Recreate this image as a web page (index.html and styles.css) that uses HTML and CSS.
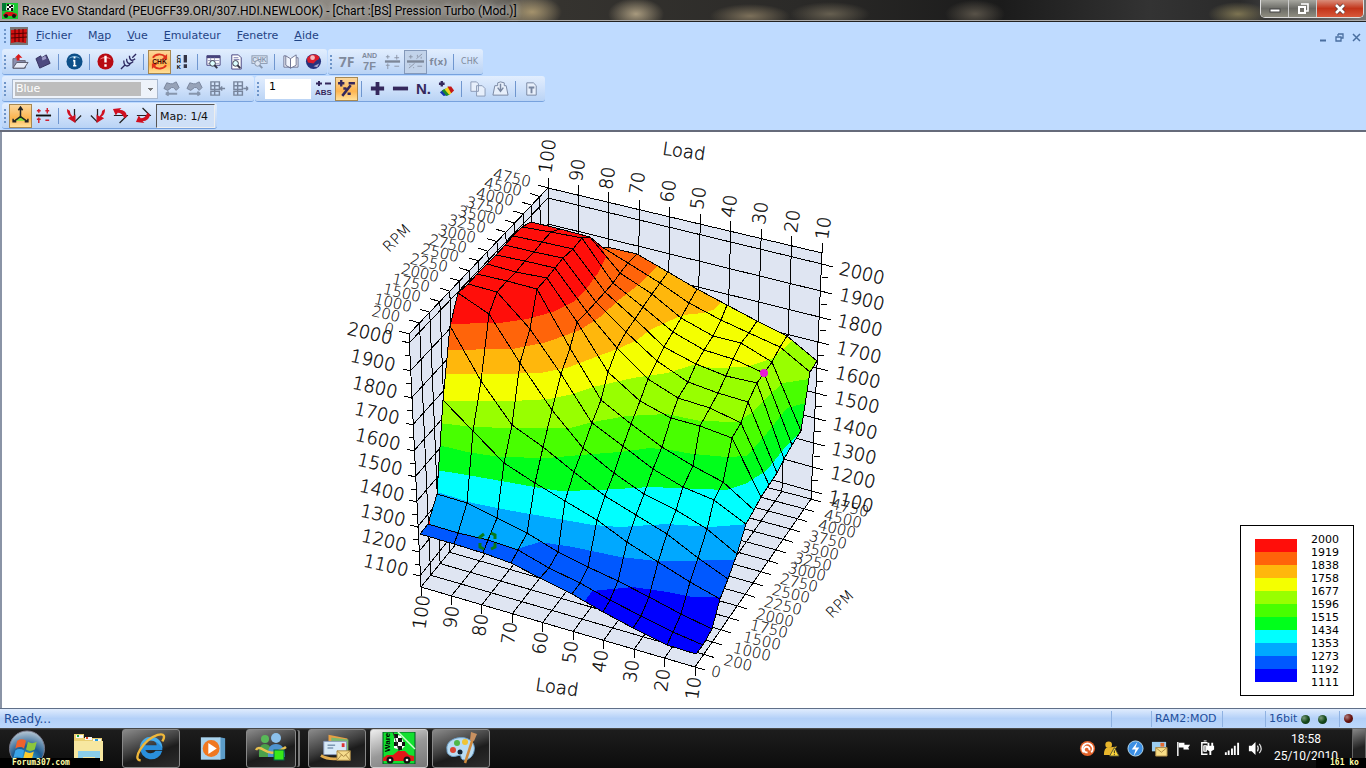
FILE: index.html
```html
<!DOCTYPE html>
<html lang="fr">
<head>
<meta charset="utf-8">
<title>Race EVO Standard</title>
<link rel="stylesheet" href="styles.css">
</head>
<body>
<header class="titlebar">
  <svg class="app-icon" viewBox="0 0 16 16"><rect width="16" height="16" fill="#18c830"/><path d="M5 1l7 1-1 6-7-1z" fill="#fff"/><path d="M5 1h2v2H5zM9 2h2v2H9zM7 3h2v2H7zM5 5h2v2H5zM9 5h2v3H9z" fill="#111"/><path d="M1 12l3-3h6l5 2v2H1z" fill="#d81414"/><circle cx="4" cy="13" r="2" fill="#111"/><circle cx="12" cy="13" r="2" fill="#111"/><path d="M0 0h4v8H0z" fill="#073"/></svg>
  <h1 class="title-text">Race EVO Standard (PEUGFF39.ORI/307.HDI.NEWLOOK) - [Chart :[BS] Pression Turbo (Mod.)]</h1>
  <div class="win-controls">
    <button class="win-btn" aria-label="Minimize"><svg width="12" height="10"><rect x="1" y="5" width="10" height="3" fill="#fff" stroke="#444"/></svg></button>
    <button class="win-btn" aria-label="Restore"><svg width="12" height="12"><path d="M4 1h7v7H9" fill="none" stroke="#fff" stroke-width="1.6"/><rect x="2" y="4" width="6" height="6" fill="none" stroke="#fff" stroke-width="2"/></svg></button>
    <button class="win-btn win-close" aria-label="Close"><svg width="12" height="12"><path d="M2 2l8 8M10 2l-8 8" stroke="#533" stroke-width="4"/><path d="M2 2l8 8M10 2l-8 8" stroke="#fff" stroke-width="2.6"/></svg></button>
  </div>
</header>

<div class="bars">
  <nav class="menubar">
    <span class="grip"></span>
    <svg class="map-icon" viewBox="0 0 18 18"><rect width="18" height="18" fill="#777"/><path d="M1 3l16-1-1 14-9-1-6 1z" fill="#d01010"/><path d="M1 7l16-1M1 11l16-1M5 2v13M9 2v13M13 2v13" stroke="#500" fill="none"/></svg>
    <a href="#" class="menu-item"><u>F</u>ichier</a>
    <a href="#" class="menu-item">M<u>a</u>p</a>
    <a href="#" class="menu-item"><u>V</u>ue</a>
    <a href="#" class="menu-item"><u>E</u>mulateur</a>
    <a href="#" class="menu-item"><u>F</u>enetre</a>
    <a href="#" class="menu-item"><u>A</u>ide</a>
    <div class="mdi">
      <button aria-label="Minimize chart"><svg width="8" height="8"><path d="M1 6.500h6" stroke="#4a6fa0" stroke-width="2"/></svg></button>
      <button aria-label="Restore chart"><svg width="9" height="9"><path d="M3 1h5v4H6M1 4h5v4H1zM3 1v2" fill="none" stroke="#4a6fa0" stroke-width="1.300"/></svg></button>
      <button aria-label="Close chart"><svg width="9" height="9"><path d="M1 1l7 7M8 1l-7 7" stroke="#4a6fa0" stroke-width="1.500"/></svg></button>
    </div>
  </nav>

  <div class="row">
    <div class="toolbar">
      <span class="grip"></span>
      <button class="tb" aria-label="Open"><svg viewBox="0 0 18 18"><path d="M1 6h5l2 2h6v8H1z" fill="#8c90b0" stroke="#667"/><path d="M1 16l4-6h12l-4 6z" fill="#e8ecf8" stroke="#556"/><path d="M5 8V5H3l4-4 4 4H8v3z" fill="#d81818"/></svg></button>
      <button class="tb" aria-label="Save"><svg viewBox="0 0 18 18"><path d="M1 6l5-3 1 2 5-3 4 9-11 5z" fill="#4d4a80" stroke="#33305c"/><path d="M7 5l4-2 1 3-4 2z" fill="#9d9ac8"/></svg></button>
      <i class="sep"></i>
      <button class="tb" aria-label="Information"><svg viewBox="0 0 18 18"><circle cx="9" cy="9" r="8.500" fill="#0d4f88"/><path d="M3 6a7 6 0 0 1 12 0q-6-3-12 0" fill="#7fb8de"/><path d="M9 7.500V14M7.500 8H9M7.500 13.500h3.500M8 5h2" stroke="#fff" stroke-width="1.800" fill="none"/></svg></button>
      <i class="sep"></i>
      <button class="tb" aria-label="Alert"><svg viewBox="0 0 18 18"><circle cx="9" cy="9" r="8.500" fill="#b80a12"/><path d="M3 7a7 6 0 0 1 12 0q-6-3-12 0" fill="#ef7d7d"/><path d="M9 3v7M9 12v2.500" stroke="#fff" stroke-width="2.500"/></svg></button>
      <button class="tb" aria-label="Link"><svg viewBox="0 0 18 18"><path d="M1 17l4-4M13 5l4-4M4 8c0 7 5 7 7 3M7 6c0 6 4 6 7 3M10 3c0 5 3 6 6 3" stroke="#2b2860" stroke-width="1.400" fill="none"/></svg></button>
      <i class="sep"></i>
      <button class="tb on" aria-label="Checksum automatic"><svg viewBox="0 0 20 20"><path d="M3 6a8 7 0 0 1 13-1M17 14a8 7 0 0 1-13 1" fill="none" stroke="#e0301c" stroke-width="2"/><path d="M18 2v6h-6zM2 18v-6h6z" fill="#e0301c"/><text x="10" y="13" class="t7" text-anchor="middle" fill="#400">CHK</text></svg></button>
      <button class="tb" aria-label="Checksum alert"><svg viewBox="0 0 18 18"><text x="3" y="6" class="t6">C</text><text x="3" y="11" class="t6">H</text><text x="3" y="17" class="t6">K</text><path d="M12 2v8M12 12v4" stroke="#334" stroke-width="3.500"/></svg></button>
      <i class="sep"></i>
      <button class="tb" aria-label="Preview table"><svg viewBox="0 0 18 18"><path d="M2 3h14v10H2z" fill="#fff" stroke="#46427c"/><path d="M2 4h14" stroke="#46427c" stroke-width="3"/><path d="M3 8h12M3 11h12M6 5v8M10 5v8" stroke="#99b"/><circle cx="8" cy="11" r="3" fill="#dff" stroke="#334"/><path d="M10 13l3 3" stroke="#334" stroke-width="2"/></svg></button>
      <button class="tb" aria-label="Preview page"><svg viewBox="0 0 18 18"><path d="M4 2h7l3 3v12H4z" fill="#fff" stroke="#46427c"/><path d="M6 5h5M6 7h6" stroke="#77a"/><circle cx="8" cy="11" r="3" fill="#dff" stroke="#334"/><path d="M10 13l3 3" stroke="#334" stroke-width="2"/></svg></button>
      <button class="tb off" aria-label="Preview checksum"><svg viewBox="0 0 18 18"><rect x="1" y="3" width="16" height="8" fill="#dde6f3" stroke="#8796ad"/><text x="9" y="10" class="t7" text-anchor="middle" fill="#8796ad">CHK</text><circle cx="7" cy="11" r="3" fill="#dde6f3" stroke="#8796ad"/><path d="M9 13l3 3" stroke="#8796ad" stroke-width="2"/></svg></button>
      <i class="sep"></i>
      <button class="tb" aria-label="Book"><svg viewBox="0 0 18 18"><path d="M2 3h2v10l5 3V6L4 3M2 3v12h6l1 1 1-1h7V5h-2" fill="#f1f4fc" stroke="#6d7392"/><path d="M9 6l6-4v11l-6 3z" fill="#fff" stroke="#6d7392"/></svg></button>
      <button class="tb" aria-label="Web"><svg viewBox="0 0 18 18"><circle cx="9" cy="9" r="8" fill="#26327e"/><path d="M2 6a8 8 0 0 1 13-2q1 3-3 4l-3 3-6-1z" fill="#d91c2c"/><circle cx="8" cy="5" r="2.500" fill="#fff" opacity=".7"/><path d="M9 14l6-3-2 4z" fill="#aac"/></svg></button>
    </div>
    <div class="toolbar">
      <span class="grip"></span>
      <button class="tb glyph big">7F</button>
      <button class="tb glyph duo"><span>AND</span><b>7F</b></button>
      <button class="tb" aria-label="Add or subtract"><svg viewBox="0 0 18 18"><path d="M1 9h16" stroke="#7d8798" stroke-width="2.500"/><path d="M2 4h4M4 2v4M11 5h5M13.500 2v5M4 11v6M2 13h4M11 14h5" stroke="#8c96a8"/></svg></button>
      <button class="tb pressed" aria-label="Percent"><svg viewBox="0 0 18 18"><path d="M0 9h18" stroke="#7d8798" stroke-width="2.500"/><path d="M2 4h4M4 2v4M10 6l6-5M2 16l6-5M11 14h5M11 2v2M15 4v2M3 12v1M7 15v1" stroke="#8c96a8"/></svg></button>
      <button class="tb glyph fx">f(x)</button>
      <i class="sep"></i>
      <button class="tb glyph chk">CHK</button>
    </div>
  </div>

  <div class="row">
    <div class="toolbar">
      <span class="grip"></span>
      <select class="combo" aria-label="Colour" disabled><option>Blue</option></select>
      <button class="tb off" aria-label="Previous difference"><svg viewBox="0 0 18 18"><path d="M1 9l3-6 4 1h2l4-2 3 6-3 3-3-3H9l-4 3z" fill="#97a3b8" stroke="#78859c"/><path d="M3 14.500h12M3 14.500l3-2M3 14.500l3 2" stroke="#8796ad" stroke-width="2"/></svg></button>
      <button class="tb off" aria-label="Next difference"><svg viewBox="0 0 18 18"><path d="M1 9l3-6 4 1h2l4-2 3 6-3 3-3-3H9l-4 3z" fill="#97a3b8" stroke="#78859c"/><path d="M3 14.500h12M15 14.500l-3-2M15 14.500l-3 2" stroke="#8796ad" stroke-width="2"/></svg></button>
      <button class="tb off" aria-label="Insert cell"><svg viewBox="0 0 18 18"><path d="M2 2h9v4H2zM2 6h9v4H2zM2 12h9v4H2zM6 2v14M17 9h-5M12 9l2-2M12 9l2 2" fill="none" stroke="#78859c" stroke-width="1.500"/></svg></button>
      <button class="tb off" aria-label="Extract cell"><svg viewBox="0 0 18 18"><path d="M2 2h9v4H2zM2 6h9v4H2zM2 12h9v4H2zM6 2v14M12 9h5M17 9l-2-2M17 9l-2 2" fill="none" stroke="#78859c" stroke-width="1.500"/></svg></button>
    </div>
    <div class="toolbar">
      <span class="grip"></span>
      <input class="step" aria-label="Step" value="1">
      <button class="tb glyph abs"><svg viewBox="0 0 17 7"><path d="M1 3.500h6M4 1v5M10 3.500h6" stroke="#35285c" stroke-width="2"/></svg><span>ABS</span></button>
      <button class="tb on" aria-label="Percent step"><svg viewBox="0 0 18 18"><path d="M1 4h6M4 1v6M11 4h6" stroke="#35285c" stroke-width="2.200"/><path d="M5 16l8-10M6 9h3M10 14h3" stroke="#35285c" stroke-width="2.400"/></svg></button>
      <i class="sep"></i>
      <button class="tb" aria-label="Increase"><svg viewBox="0 0 18 18"><path d="M2 9h14M9 2v14" stroke="#35285c" stroke-width="4"/></svg></button>
      <button class="tb" aria-label="Decrease"><svg viewBox="0 0 18 18"><path d="M1 9h16" stroke="#35285c" stroke-width="4"/></svg></button>
      <button class="tb glyph num">N.</button>
      <button class="tb" aria-label="Colours"><svg viewBox="0 0 18 18"><path d="M1 4h6M4 1v6" stroke="#35285c" stroke-width="2.500"/><path d="M2 13l4-3 5 6-5 1z" fill="#1536b0"/><path d="M4 11l4-2 5 6-4 2z" fill="#1d8b2b"/><path d="M7 10l4-3 4 6-3 3z" fill="#f0d520"/><path d="M10 7l4 0 3 4-3 3z" fill="#c41818"/></svg></button>
      <i class="sep"></i>
      <button class="tb off" aria-label="Copy"><svg viewBox="0 0 18 18"><path d="M2 2h6l2 2v8H2zM8 6h6l3 3v8H8z" fill="#e7effb" stroke="#8a99b5"/></svg></button>
      <button class="tb off" aria-label="Paste"><svg viewBox="0 0 18 18"><path d="M1 16l2-10h3V3l3-1 4 1v3h2l2 10z" fill="#e7effb" stroke="#7886a0"/><path d="M9 4v7M6 8l3 4 3-4" stroke="#7886a0" stroke-width="1.500" fill="none"/></svg></button>
      <i class="sep"></i>
      <button class="tb off" aria-label="Text"><svg viewBox="0 0 18 18"><path d="M4 3h7l3 3v10H4z" fill="#e7effb" stroke="#7886a0"/><path d="M6 8h6M9 8v6" stroke="#7886a0" stroke-width="2"/></svg></button>
    </div>
  </div>

  <div class="row">
    <div class="toolbar">
      <span class="grip"></span>
      <button class="tb on" aria-label="3D axes"><svg viewBox="0 0 18 18"><path d="M9 9L3 14h12z" fill="#7ee03a"/><path d="M9 2v8L2 15M9 10l7 5M7 4l2-3 2 3M2 12v3h3M16 12v3h-3" fill="none" stroke="#222" stroke-width="1.400"/></svg></button>
      <button class="tb" aria-label="Offset"><svg viewBox="0 0 18 18"><path d="M1 9h16" stroke="#111" stroke-width="2"/><path d="M2 4h4M4 2v4M13 1v6M11 4h4M4 11v6M2 13h4M11 14h4" stroke="#d02030" stroke-width="1.500"/></svg></button>
      <i class="sep"></i>
      <button class="tb" aria-label="Rotate left"><svg viewBox="0 0 18 18"><path d="M9 16V2M9 16l7-7" stroke="#222" stroke-width="1.300"/><path d="M1 2q0 6 4 8l-3 2 8 5V8l-3 2Q4 7 4 4z" fill="#d01020"/></svg></button>
      <button class="tb" aria-label="Rotate right"><svg viewBox="0 0 18 18"><path d="M9 16V2M9 16L2 9" stroke="#222" stroke-width="1.300"/><path d="M17 2q0 6-4 8l3 2-8 5V8l3 2q3-3 3-6z" fill="#d01020"/></svg></button>
      <button class="tb" aria-label="Rotate up"><svg viewBox="0 0 18 18"><path d="M2 9h15M16 9l-8 8" stroke="#222" stroke-width="1.300"/><path d="M10 1L1 2l3 7 2-3q5 0 7 6l3-2Q15 3 8 3z" fill="#d01020"/></svg></button>
      <button class="tb" aria-label="Rotate down"><svg viewBox="0 0 18 18"><path d="M2 9h15M16 9L8 1" stroke="#222" stroke-width="1.300"/><path d="M10 17l-9-1 3-7 2 3q5 0 7-6l3 2q-1 7-8 7z" fill="#d01020"/></svg></button>
      <output class="mapbox">Map: 1/4</output>
    </div>
  </div>
</div>

<main class="canvas">
  <svg id="chart" class="chart" viewBox="0 132 1366 576" role="img" aria-label="Pression Turbo"></svg>
  <div class="legend">
    <div class="swatches"><i class="c0"></i><i class="c1"></i><i class="c2"></i><i class="c3"></i><i class="c4"></i><i class="c5"></i><i class="c6"></i><i class="c7"></i><i class="c8"></i><i class="c9"></i><i class="c10"></i></div>
    <ol class="values"><li>2000</li><li>1919</li><li>1838</li><li>1758</li><li>1677</li><li>1596</li><li>1515</li><li>1434</li><li>1353</li><li>1273</li><li>1192</li><li>1111</li></ol>
  </div>
</main>

<footer class="status">
  <span class="ready">Ready...</span>
  <span class="cell w40"></span>
  <span class="cell w70">RAM2:MOD</span>
  <span class="cell w44"></span>
  <span class="cell w34">16bit</span>
  <span class="led"></span><span class="led"></span><span class="cell led-cell"><span class="led red"></span></span>
</footer>

<div class="taskbar">
  <button class="task orb" aria-label="Start"><svg viewBox="0 0 40 40"><defs><radialGradient id="orb" cx=".5" cy=".9" r=".9"><stop offset="0" stop-color="#39c4f0"/><stop offset=".5" stop-color="#1d5a8f"/><stop offset="1" stop-color="#b8c8d4"/></radialGradient></defs><circle cx="20" cy="20" r="18" fill="url(#orb)" stroke="#778"/><path d="M10 12q5-3 9 0l-2 8q-4-3-9 0z" fill="#f0622c"/><path d="M21 13q4 3 9 0l-2 8q-5 3-9 0z" fill="#8cc63c"/><path d="M8 22q4-3 9 0l-2 8q-5-3-9 0z" fill="#39a4e8"/><path d="M18 23q5 3 9 0l-2 8q-4 3-9 0z" fill="#fccb2e"/></svg></button>
  <button class="task explorer" aria-label="Explorer"><svg viewBox="0 0 34 32"><path d="M2 2h10v4h18v23H2z" fill="#e9cf72"/><path d="M4 3h7v3H4zM13 5h7v3h-7zM21 7h8v3h-8z" fill="#f8f8f8"/><path d="M5 3h2v2H5z" fill="#2a4"/><path d="M14 5h2v2h-2z" fill="#d42"/><path d="M23 7h3v2h-3z" fill="#29d"/><path d="M2 9h29v20H2z" fill="#f7e7a0"/><path d="M6 19h22v12h-5v-6H11v6H6z" fill="#8bcdea"/></svg></button>
  <button class="task framed" aria-label="Internet Explorer"><svg viewBox="0 0 36 34"><path d="M18 5a12 12 0 1 0 12 15h-7a6 5 0 0 1-11-1h18A12 12 0 0 0 18 5m-6 9a6 5 0 0 1 12 0z" fill="#2a8fdc"/><path d="M18 5a12 12 0 0 0-12 12q4-9 12-8t12 8A12 12 0 0 0 18 5" fill="#5cc0f5" opacity=".6"/><path d="M7 30C-3 30 10 8 25 3c8-2 8 2 5 7" fill="none" stroke="#efb73a" stroke-width="2.500"/></svg></button>
  <button class="task plain" aria-label="Media Player"><svg viewBox="0 0 30 28"><path d="M22 2l6 1v22l-6 1z" fill="#5c9cc8"/><path d="M2 2h21v24H2z" fill="#a9d3ee"/><circle cx="13" cy="14" r="9" fill="#f07820"/><path d="M10 8l9 6-9 6z" fill="#fff"/></svg></button>
  <button class="task framed stack" aria-label="Messenger"><svg viewBox="0 0 34 30"><circle cx="11" cy="6" r="4" fill="#58b858"/><path d="M5 24q-1-13 6-13t7 13z" fill="#4ba04b"/><circle cx="22" cy="5" r="5" fill="#8cc0ea"/><path d="M14 24q-1-13 8-13t9 13z" fill="#4e93cf"/><path d="M2 17q2-4 8 0t12 2 10-5" fill="none" stroke="#e8c050" stroke-width="2.500"/><rect x="20" y="17" width="10" height="10" fill="#38e818" stroke="#064"/></svg></button>
  <button class="task framed" aria-label="Mail"><svg viewBox="0 0 36 30"><path d="M9 1l20 4v15H9z" fill="#e7a044"/><path d="M12 4l18 2v14H12z" fill="#7cb86c"/><path d="M4 8h24v14H4z" fill="#d7e9f8" stroke="#89b"/><path d="M8 12h8M8 15h6" stroke="#468"/><path d="M23 10h3v4h-3z" fill="#d33"/><path d="M1 23q8 5 20 3" stroke="#e2ac50" stroke-width="3" fill="none"/><path d="M18 18h14v10H18z" fill="#f6dc8c" stroke="#a84"/><path d="M18 18l7 6 7-6M18 28l5-6M32 28l-5-6" stroke="#a84" fill="none"/></svg></button>
  <button class="task framed active" aria-label="Race EVO"><svg viewBox="0 0 32 32"><rect width="32" height="32" fill="#12e030" stroke="#052"/><path d="M15 0l17 17" stroke="#cfc" stroke-width="1.500"/><path d="M11 2l7 2 4 10-4 4-7-2z" fill="#fff"/><path d="M11 2h4v4h-4zM15 6h4v4h-4zM11 10h4v4h-4zM19 10h3v4h-3zM15 14h4v4h-4z" fill="#111"/><path d="M10 0l9 28" stroke="#333"/><text class="t8" transform="translate(7 20) rotate(-90)">Ware</text><path d="M0 26l4-3h6l5-4h7l4 4 5 1v5H0z" fill="#e01818"/><circle cx="7" cy="28" r="3.500" fill="#111"/><circle cx="24" cy="28" r="3.500" fill="#111"/><circle cx="7" cy="28" r="1.300" fill="#fff"/><circle cx="24" cy="28" r="1.300" fill="#fff"/></svg></button>
  <button class="task framed" aria-label="Paint"><svg viewBox="0 0 34 32"><path d="M3 18C1 8 15 3 24 7s7 14 3 18-10 4-10 0-6 1-10-1-4-4-4-6" fill="#b9dcf3" stroke="#6a9cc4"/><circle cx="9" cy="18" r="3" fill="#dc4634"/><circle cx="13" cy="11" r="3" fill="#50b848"/><circle cx="21" cy="10" r="3" fill="#f0c434"/><circle cx="16" cy="20" r="2.500" fill="#123"/><path d="M29 6L21 31" stroke="#d08a3c" stroke-width="2.500"/><path d="M27 0l6 2-3 7-4-1z" fill="#c89060"/></svg></button>
  <div class="tray">
    <svg viewBox="0 0 18 18"><circle cx="9" cy="9" r="8" fill="#e2622a"/><path d="M5 13a5.500 5.500 0 1 1 8 0M9 13a3 3 0 1 1 2-2" fill="none" stroke="#fff" stroke-width="2"/></svg>
    <svg viewBox="0 0 18 18"><circle cx="6" cy="5" r="3.500" fill="#e8b62c"/><path d="M1 16q0-9 5-8l9-1-4 4v5z" fill="#e8b62c"/><path d="M12 8l5 9H7z" fill="#ffd93c" stroke="#553"/><path d="M12 11v3M12 15v1" stroke="#222"/></svg>
    <svg viewBox="0 0 18 18"><circle cx="9" cy="9" r="8" fill="#3c8fe4" stroke="#bde"/><path d="M11 2L5 10h4l-2 7 6-9H9z" fill="#fff"/></svg>
    <svg viewBox="0 0 18 18"><path d="M1 2h15v10H1z" fill="#9ccdf0"/><path d="M10 3h4v4h-4z" fill="#e66a30"/><path d="M5 8h12v9H5z" fill="#f8dd86" stroke="#a84"/><path d="M5 8l6 5 6-5" stroke="#a84" fill="none"/></svg>
    <svg viewBox="0 0 18 18"><path d="M3 2v15" stroke="#fff" stroke-width="1.500"/><path d="M4 3h6v2h6l-2 3 1 2H9V8H4z" fill="#fff"/></svg>
    <svg viewBox="0 0 18 18"><path d="M9 3H3v12h6" fill="none" stroke="#fff" stroke-width="1.600"/><path d="M5 1h3M5 6h3v6H5z" stroke="#fff" fill="#aaa"/><path d="M8 6h8v4l-3 2v4h-2v-4l-3-2zM9 3h2v3H9zM13 3h2v3h-2z" fill="#fff"/></svg>
    <svg viewBox="0 0 18 18"><path d="M3 16v-3M6 16v-5M9.500 16V9M12.500 16V6M16 16V3" stroke="#fff" stroke-width="2"/></svg>
    <svg viewBox="0 0 18 18"><path d="M2 6h3l4-4v14l-4-4H2z" fill="#fff"/><path d="M11 6q2 3 0 6M13 4q4 5 0 10" stroke="#ddd" fill="none" stroke-width="1.300"/></svg>
  </div>
  <time class="clock"><span>18:58</span><span>25/10/2010</span></time>
  <button class="show-desktop" aria-label="Show desktop"></button>
</div>
<span class="tag tag-left">Forum307.com</span>
<span class="tag tag-right">161 ko</span>
<script src="chart.js"></script>
</body>
</html>
```
FILE: styles.css
```css
* { box-sizing: border-box; }
body { margin: 0; height: 100vh; display: flex; flex-direction: column; overflow: hidden; background: #bfdbff; font: 11px "DejaVu Sans", sans-serif; color: #1f3f7d; }
button { border: 0; padding: 0; background: none; font: inherit; color: inherit; }
.titlebar { flex: none; height: 22px; display: flex; align-items: center; padding: 0 2px; border-bottom: 1px solid #222; box-shadow: inset 0 -1px #aaa;
  background: radial-gradient(ellipse 30px 16px at 532px 12px, #a4926c, transparent), radial-gradient(ellipse 28px 16px at 636px 14px, #a89a7e, transparent), radial-gradient(ellipse 40px 12px at 750px 16px, #7c705a, transparent), radial-gradient(ellipse 40px 12px at 830px 14px, #665f50, transparent), radial-gradient(ellipse 30px 14px at 975px 14px, #585248, transparent), radial-gradient(ellipse 30px 12px at 1238px 14px, #7d7452, transparent), linear-gradient(90deg, #a39e98 0, #8f8b84 300px, #77736c 480px, #35332f 560px, #2b2a28 800px, #1b1b1b 1000px, #333 1150px, #2a2a2a 1240px, #777 1366px); }
.app-icon { width: 16px; height: 16px; margin-right: 4px; flex: none; }
.title-text { margin: 0; font: 12px Roboto, sans-serif; color: #000; text-shadow: 0 0 5px #ddd, 0 0 8px #ccc; white-space: nowrap; flex: 1; }
.win-controls { display: flex; align-self: flex-start; border: 1px solid #ddd; border-top: 0; border-radius: 0 0 5px 5px; overflow: hidden; }
.win-btn { width: 28px; height: 17px; display: grid; place-items: center; border-right: 1px solid #ccc; background: linear-gradient(#a7a7a0, #6b6b66 50%, #8f8d80); }
.win-close { width: 46px; border: 0; background: linear-gradient(#d98d7a, #c2341a 50%, #d8583a); }
.bars { flex: none; }
.menubar { height: 27px; display: flex; align-items: center; padding: 0 5px 0 2px; }
.map-icon { width: 18px; height: 18px; margin: 0 8px 0 1px; }
.grip { flex: none; width: 7px; height: 16px; background: radial-gradient(circle at 3px 2px, #6d94c8 1px, transparent 1px) 0 0 / 7px 4px; }
.menu-item { color: #1f4384; text-decoration: none; margin-right: 16px; }
.mdi { margin-left: auto; display: flex; gap: 8px; padding-top: 6px; }
.row { display: flex; height: 27px; padding-left: 2px; }
.toolbar { display: flex; align-items: center; height: 26px; padding-right: 2px; border-radius: 3px; background: linear-gradient(#e2eefe, #cfe1fa 50%, #b9d3f5); border-bottom: 1px solid #77a2de; margin-right: 1px; }
.tb { flex: none; width: 23px; height: 24px; display: flex; align-items: center; justify-content: center; border: 1px solid transparent; }
.tb svg { width: 17px; height: 17px; flex: none; }
.tb.on { background: linear-gradient(#fbd79c, #fdb44f 60%, #ffe09a); border-color: #a88850; }
.tb.on svg { width: 19px; height: 19px; }
.tb.pressed { background: #c2d3ea; border-color: #8499ba; }
.glyph { color: #808a9c; }
.big { font: bold 14px "Open Sans", sans-serif; }
.duo { flex-direction: column; font: bold 7px/8px "Liberation Sans", sans-serif; }
.duo b { font: bold 11px/12px "Liberation Sans", sans-serif; }
.fx { font-weight: bold; font-size: 9px; }
.chk { font-size: 8px; }
.tb.abs { flex-direction: column; gap: 1px; font: bold 8px/9px "Liberation Sans", sans-serif; color: #35285c; }
.tb.abs svg { height: 7px; }
.num { font: bold 15px "Liberation Sans", sans-serif; color: #35285c; }
.sep { width: 1px; height: 16px; margin: 0 4px 0 3px; background: #6f96cf; }
.combo { width: 146px; height: 20px; margin: 0 2px 0 3px; border: 1px solid #a9b9cf; color: #fff; font: inherit; appearance: none; padding: 0 3px; opacity: 1; background-color: #eef3fa; background-repeat: no-repeat;
  background-image: linear-gradient(#bdbdbd, #bdbdbd), linear-gradient(#777, #777), linear-gradient(#777, #777), linear-gradient(#777, #777); background-size: 126px 14px, 5px 1px, 3px 1px, 1px 1px; background-position: 2px 2px, 135px 8px, 136px 9px, 137px 10px; }
.step { width: 46px; height: 20px; margin: 0 1px 0 3px; border: 0; background: #fff; font: inherit; color: #000; padding: 0 4px 4px; }
.mapbox { margin-left: 1px; width: 59px; height: 24px; line-height: 23px; padding-left: 3px; color: #111; border: 1px solid #555; border-right-color: #eee; border-bottom-color: #eee; background: #cfe0f7; white-space: nowrap; }
.t6, .t7, .t8 { font: bold 6px "Liberation Sans", sans-serif; }
.t7 { font-size: 7px; }
.t8 { font-size: 8px; }
.canvas { position: relative; flex: 1; min-height: 0; background: #fff; border-top: 2px solid #8a94a6; border-top: 2px solid #666b7a; box-shadow: inset 2px 0 #8a94a6; }
.chart { display: block; width: 100%; height: 100%; }
.chart .wall { fill: #dfe5f2; }
.chart .line { fill: none; stroke: #000; shape-rendering: crispEdges; }
.chart text { font: 200 18px "DejaVu Sans", sans-serif; fill: #000; stroke: #000; stroke-width: .3px; text-anchor: middle; dominant-baseline: central; }
.chart .rpm { font-size: 15px; stroke-width: .1px; }
.legend { position: absolute; right: 12px; bottom: 12px; width: 114px; display: flex; gap: 14px; padding: 12px 14px 6px; border: 1px solid #000; background: #fff; color: #000; }
.swatches { width: 42px; padding-top: 1px; }
.swatches i { display: block; height: 13px; }
.values { list-style: none; margin: -5px 0 0; padding: 0; line-height: 13px; }
.c0 { background: #ff0e0a; } .c1 { background: #ff640a; } .c2 { background: #ffb70c; } .c3 { background: #f4ff00; } .c4 { background: #98ff00; } .c5 { background: #48ff00; } .c6 { background: #00ff1b; } .c7 { background: #00ffff; } .c8 { background: #00a8ff; } .c9 { background: #0058ff; } .c10 { background: #0000ff; }
.status { flex: none; height: 20px; display: flex; align-items: center; padding: 1px 13px 0 4px; border-top: 1px solid #5f6f88; background: linear-gradient(#e0ecfd, #b3d0f8 50%, #bcd7fb); color: #1e4e9c; }
.ready { flex: 1; font-size: 12px; }
.cell { height: 16px; line-height: 16px; border-left: 1px solid #8fb2e2; padding-left: 3px; }
.w40 { width: 40px; } .w70 { width: 71px; } .w44 { width: 43px; } .w34 { width: 36px; }
.led { width: 9px; height: 9px; margin-right: 8px; border-radius: 50%; background: radial-gradient(circle at 3px 3px, #7a9a7a, #164a1c 50%, #0b2c10); }
.led.red { display: block; margin: 3px 0 0 1px; background: radial-gradient(circle at 3px 3px, #b08080, #6a1410 50%, #3c0a08); }
.led-cell { margin-left: 4px; }
.taskbar { flex: none; height: 40px; display: flex; align-items: center; padding-left: 4px; background: linear-gradient(#555, #1d1d1d 2px, #0c0c0c); color: #fff; }
.task { flex: none; display: flex; align-items: center; justify-content: center; height: 39px; }
.task svg { width: 34px; height: 32px; }
.orb { width: 46px; }
.orb svg { width: 40px; height: 39px; }
.explorer { width: 72px; }
.explorer svg { margin-left: 6px; }
.framed { width: 58px; margin-right: 4px; border: 1px solid #888; border-radius: 3px; background: linear-gradient(160deg, #8a8a8a, #3c3c3c 45%, #1c1c1c 60%, #2c2c2c); }
.plain { width: 58px; margin-right: 4px; }
.plain svg { width: 28px; height: 27px; }
.stack { width: 50px; margin-right: 12px; box-shadow: 3px 0 0 -1px #111, 5px 0 0 -1px #777; }
.active { background: linear-gradient(160deg, #eee, #999 50%, #777); border-color: #ccc; }
.tray { margin-left: auto; display: flex; gap: 7px; }
.tray svg { width: 17px; height: 17px; }
.clock { display: flex; flex-direction: column; align-items: center; width: 88px; font: 12px/17px Roboto, sans-serif; padding-right: 4px; }
.show-desktop { width: 14px; height: 40px; border: 1px solid #666; background: linear-gradient(160deg, #888, #222 50%); }
.tag { position: absolute; bottom: 0; height: 10px; background: #000; color: #ffffa8; font: bold 8px/10px "DejaVu Sans Mono", monospace; white-space: nowrap; }
.tag-left { left: 0; width: 100px; padding-left: 12px; }
.tag-right { right: 0; width: 50px; padding-left: 14px; }
```
FILE: chart.js
```js
const NS = "http://www.w3.org/2000/svg";
const chart = document.getElementById("chart");

function add(parent, tag, attrs, text) {
  const el = document.createElementNS(NS, tag);
  for (const k in attrs) el.setAttribute(k, attrs[k]);
  if (text !== undefined) el.textContent = text;
  parent.appendChild(el);
  return el;
}
const line = (...pts) => add(chart, "polyline", { class: "line", points: pts.join(" ") });
const label = (text, x, y, angle, cls) =>
  add(chart, "text", { class: cls || "", transform: `translate(${x} ${y}) rotate(${angle})` }, text);
const mix = (a, b, t) => [a[0] + (b[0] - a[0]) * t, a[1] + (b[1] - a[1]) * t];

const loads = [100, 90, 80, 70, 60, 50, 40, 30, 20, 10];
const rpms = [0, 200, 1000, 1500, 1750, 2000, 2250, 2500, 2750, 3000, 3250, 3500, 3750, 4000, 4500, 4750];

/* corners of the chart box */
const box = {
  leftTop: [409, 334], leftBottom: [421, 587], rightBottom: [695, 667],
  backTopL: [548, 188], backTopR: [822, 253], backBottomL: [549, 430], backBottomR: [811, 499]
};
add(chart, "polygon", { class: "wall", points: [box.leftTop, box.backTopL, box.backTopR, box.backBottomR, box.rightBottom, box.leftBottom].join(" ") });

/* depth fraction of each RPM step, steps shrink toward the back */
const depth = i => (i * 37 - i * (i - 1) * 0.3) / 492;

/* walls and floor */
line(box.leftTop, box.backTopL, box.backTopR);
line(box.leftBottom, box.leftTop);
line(box.leftBottom, box.rightBottom, box.backBottomR);
line(box.backBottomL, box.backBottomR);
rpms.forEach((r, i) => {
  const t = depth(i);
  const top = mix(box.leftTop, box.backTopL, t);
  const bottom = mix(box.leftBottom, box.backBottomL, t);
  const right = mix(box.rightBottom, box.backBottomR, t);
  line([top[0] - 10, top[1] - 3], top, bottom, right, [right[0] + 10, right[1] + 3]);
});
loads.forEach((l, j) => {
  const t = j / 9;
  const top = mix(box.backTopL, box.backTopR, t);
  const back = mix(box.backBottomL, box.backBottomR, t);
  const front = mix(box.leftBottom, box.rightBottom, t);
  line([top[0], top[1] - 10], top, back, front, [front[0], front[1] + 9]);
});
const leftY = [343, 371, 398, 425, 451, 477, 502, 527, 552, 576];
const backY = [198, 224, 250, 275, 299, 323, 347, 370, 393, 416];
const rightY = [264, 291, 317, 342, 368, 393, 418, 443, 467, 491];
leftY.forEach((y, k) => {
  const lx = 409 + k * 1.2, rx = 822 - k * 1.2;
  line([lx - 7, y - 2], [lx, y], [548, backY[k]], [rx, rightY[k]], [rx + 11, rightY[k] + 3]);
  if (k < 9) {
    line([lx - 4, y + 12], [lx + 1, y + 13]);
    line([rx, rightY[k] + 13], [rx + 6, rightY[k] + 14]);
  }
});

/* surface nodes, one row of points per load, from RPM 0 to RPM 4750 */
const nodes = [
  "420,534 428,524 437,494 443,400 450,326 458,293 468,284 477,274 487,264 496,255 505,245 513,236 522,227 531,222 540,225 549,227",
  "454,544 458,533 467,503 473,431 481,381 489,314 497,292 507,281 516,272 525,261 534,252 542,242 551,232 560,229 569,232 578,236",
  "483,553 488,540 497,518 504,463 512,425 520,363 530,329 537,289 547,278 555,268 563,258 573,249 582,238 590,237 602,247 607,247",
  "511,563 518,550 527,533 535,483 543,447 552,410 561,374 570,348 577,322 587,312 596,302 605,292 613,283 620,273 628,263 637,254",
  "540,578 549,568 558,552 565,501 574,472 583,448 592,423 601,400 608,372 617,348 626,332 635,319 643,307 652,294 660,283 668,272",
  "572,594 580,583 588,567 597,520 605,496 614,473 623,446 631,424 640,401 648,379 657,361 664,347 673,332 681,318 689,303 697,289",
  "603,612 610,600 618,581 627,542 636,515 644,494 653,469 662,447 671,418 678,398 688,382 696,364 704,350 713,336 721,320 727,305",
  "633,628 641,616 649,597 658,562 667,534 676,510 683,487 693,466 700,426 710,408 718,393 726,376 733,359 741,343 749,333 757,321",
  "667,645 673,632 681,614 690,582 698,558 707,529 714,500 723,482 732,438 741,423 748,402 757,383 764,373 772,362 780,347 787,336",
  "696,654 703,645 712,629 720,599 728,579 737,554 746,524 754,510 761,497 769,485 777,473 784,459 792,445 801,431 810,372 817,361"
].map(s => s.split(" ").map(p => p.split(",").map(Number)));

const outline = [
  ...nodes[0].slice(0, 14), nodes[2][13], nodes[2][14],
  ...nodes.slice(3).map(c => c[15]), ...nodes[9].slice(0, 15).reverse(),
  ...nodes.slice(1, 9).reverse().map(c => c[0])
];
const clip = add(add(chart, "defs", {}), "clipPath", { id: "surface" });
add(clip, "polygon", { points: outline.join(" ") });

/* each band covers everything below its upper contour */
const bands = [
  ["#ff0e0a", "400,200 850,200"],
  ["#ff640a", "440,324 500,323 527,319 553,312 573,302 587,288 598,273 606,257 601,245 640,230 850,230"],
  ["#ffb70c", "440,350 513,349 547,342 580,330 600,317 620,299 642,282 657,266 665,255 850,255"],
  ["#f4ff00", "440,374 500,374 540,373 567,368 593,358 620,348 637,340 650,330 667,322 683,315 703,313 713,310 720,303 725,290 850,290"],
  ["#98ff00", "440,401 513,401 550,399 573,394 593,387 633,378 667,373 693,365 713,368 747,367 773,358 793,340 800,330 850,330"],
  ["#48ff00", "430,422 473,427 510,428 570,428 593,422 627,416 667,414 700,421 737,422 753,412 767,397 783,383 809,379 850,379"],
  ["#00ff1b", "430,443 467,452 500,457 547,458 580,455 620,452 650,448 670,450 693,454 727,457 747,456 767,433 787,408 806,403 850,400"],
  ["#00ffff", "430,469 467,475 507,482 540,488 560,491 600,490 650,487 727,490 747,483 767,470 787,445 801,431 850,410"],
  ["#00a8ff", "430,490 473,503 507,510 553,518 593,525 620,527 667,524 710,527 750,524 850,524"],
  ["#0058ff", "410,519 428,524 487,540 517,549 540,542 573,547 620,557 657,561 740,560 850,560"],
  ["#0000ff", "583,604 592,591 633,587 667,592 693,597 725,597 850,597"]
];
const surface = add(chart, "g", { "clip-path": "url(#surface)", "shape-rendering": "crispEdges" });
bands.forEach(([fill, top]) => {
  const left = top.split(",")[0];
  add(surface, "polygon", { fill, points: `${top} 850,700 ${left},700` });
});
nodes.forEach((col, j) => line(...(j < 2 ? col.slice(0, 14) : col)));
rpms.forEach((r, i) => line(...nodes.slice(i > 13 ? 2 : 0).map(c => c[i])));

/* selection marks */
add(chart, "circle", { cx: 764, cy: 373, r: 4, fill: "#e818d8" });
add(chart, "path", { d: "M480 539v-2l4-3M491 533l4 2v4M480 543v4l4 2M491 549l4-2v-4", fill: "none", stroke: "#087a18", "stroke-width": 3 });

/* axis labels */
const at = (texts, angle, pts, cls) => pts.split(" ").forEach((p, i) => label(texts[i], ...p.split(","), angle, cls));
const values = [2000, 1900, 1800, 1700, 1600, 1500, 1400, 1300, 1200, 1100];
at(values, 13, "370,333 373,360 375,387 377,413 378,439 380,464 382,490 383,515 384,540 386,565");
at(values, 13, "862,273 862,299 860,325 859,352 858,377 857,402 855,428 854,453 853,477 851,501");
at(loads, -82, "547,156 577,170 607,178 637,183 668,191 698,198 729,206 760,213 792,221 823,228");
at(loads, -82, "421,612 451,617 480,625 509,633 540,643 570,652 600,661 631,671 662,680 693,688");
at(rpms, 13, "389,329 386,314 393,303 402,293 411,283 420,273 429,263 440,253 448,244 457,234 467,224 477,215 485,206 495,197 503,187 512,178", "rpm");
at(rpms, 13, "716,672 738,663 752,652 762,641 769,629 775,618 783,606 791,594 799,583 807,572 813,562 820,551 828,540 837,529 843,519 850,508", "rpm");
label("Load", 684, 151, 8);
label("Load", 557, 687, 8);
label("RPM", 397, 238, -45, "rpm");
label("RPM", 840, 604, -45, "rpm");
```
